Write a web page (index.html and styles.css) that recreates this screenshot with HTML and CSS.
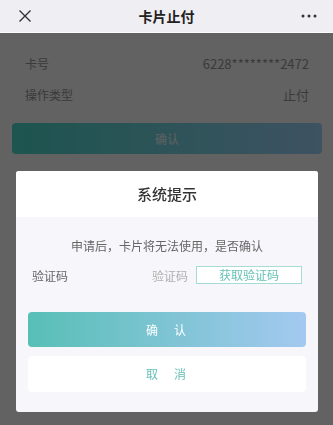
FILE: index.html
```html
<!DOCTYPE html>
<html lang="zh-CN">
<head>
    <meta charset="utf-8">
    <meta name="viewport" content="width=device-width, initial-scale=1.0">
    <title>卡片止付</title>
    <link rel="stylesheet" href="styles.css">
</head>
<body>
    <div class="topbar">
        <svg class="topbar-icon" width="14" height="14" viewBox="0 0 14 14">
            <path d="M1.5 1.5 L12.5 12.5 M12.5 1.5 L1.5 12.5" stroke="#333" stroke-width="1.4" fill="none"/>
        </svg>
        <div class="topbar-title">卡片止付</div>
        <svg class="topbar-icon" width="16" height="4" viewBox="0 0 16 4">
            <circle cx="2" cy="2" r="1.5" fill="#333"/>
            <circle cx="8" cy="2" r="1.5" fill="#333"/>
            <circle cx="14" cy="2" r="1.5" fill="#333"/>
        </svg>
    </div>

    <div class="page">
        <div class="info-row">
            <span>卡号</span>
            <span>6228********2472</span>
        </div>
        <div class="info-row">
            <span>操作类型</span>
            <span>止付</span>
        </div>
        <div class="page-btn">确认</div>
    </div>

    <div class="mask"></div>

    <div class="dialog">
        <div class="dialog-title">系统提示</div>
        <div class="dialog-body">
            <p class="dialog-msg">申请后，卡片将无法使用，是否确认</p>
            <div class="code-row">
                <span class="code-label">验证码</span>
                <span class="code-input">验证码</span>
                <span class="code-btn">获取验证码</span>
            </div>
            <div class="btn-ok">确　认</div>
            <div class="btn-cancel">取　消</div>
        </div>
    </div>
</body>
</html>
```

FILE: styles.css
```css
body {
    margin: 0;
    font-family: "Noto Sans CJK SC", "Noto Sans", sans-serif;
    background-color: #f5f5f5;
    height: 425px;
    overflow: hidden;
}
.topbar {
    height: 32px;
    background-color: #efeef3;
    border-bottom: 1px solid #fbfbfd;
    display: flex;
    align-items: center;
    justify-content: space-between;
    padding: 0 16px 0 18px;
}
.topbar-title {
    font-size: 14px;
    font-weight: bold;
    color: #222;
}
.page {
    padding: 15px 11px 0 12px;
}
.info-row {
    height: 31px;
    display: flex;
    align-items: center;
    justify-content: space-between;
    padding: 0 13px;
    font-size: 12px;
    color: #939393;
}
.info-row span:last-child {
    font-size: 13px;
}
.page-btn {
    margin-top: 13px;
    height: 31px;
    line-height: 31px;
    border-radius: 4px;
    text-align: center;
    font-size: 12px;
    color: #e6f4f2;
    background: linear-gradient(to right, #48d4c6, #9ccdf4);
}
.mask {
    position: fixed;
    top: 33px;
    left: 0;
    right: 0;
    bottom: 0;
    background-color: rgba(0,0,0,0.6);
}
.dialog {
    position: fixed;
    top: 171px;
    left: 16px;
    width: 302px;
    height: 241px;
    border-radius: 3px;
    overflow: hidden;
    background-color: #f7f6fa;
}
.dialog-title {
    height: 46px;
    line-height: 46px;
    background-color: white;
    text-align: center;
    font-size: 15px;
    font-weight: 500;
    color: #333;
}
.dialog-body {
    padding: 0 12px;
}
.dialog-msg {
    margin: 0;
    padding-top: 20px;
    line-height: 17px;
    text-align: center;
    font-size: 12px;
    color: #666;
}
.code-row {
    display: flex;
    align-items: center;
    height: 18px;
    margin-top: 12px;
    padding: 0 4px;
    font-size: 12px;
}
.code-label {
    color: #666;
    flex: 1;
}
.code-input {
    color: #b0b0b0;
    margin-right: 8px;
}
.code-btn {
    width: 104px;
    height: 16px;
    line-height: 16px;
    border: 1px solid #a6dcd5;
    text-align: center;
    color: #66c2b7;
    background-color: white;
}
.btn-ok {
    margin-top: 28px;
    height: 35px;
    line-height: 35px;
    border-radius: 4px;
    text-align: center;
    font-size: 12px;
    letter-spacing: 2px;
    color: white;
    background: linear-gradient(to right, #58bfb6, #a3c9f0);
}
.btn-cancel {
    margin-top: 9px;
    height: 36px;
    line-height: 36px;
    border-radius: 4px;
    text-align: center;
    font-size: 12px;
    letter-spacing: 2px;
    color: #66c2b7;
    background-color: white;
}
```
